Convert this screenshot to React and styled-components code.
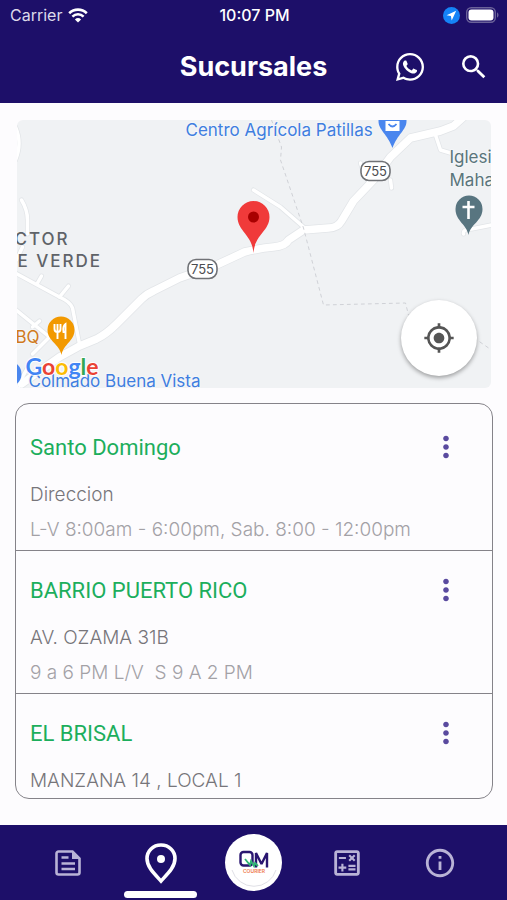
import React from "react";
import styled, { createGlobalStyle } from "styled-components";
import { FaWhatsapp } from "react-icons/fa";
import {
  MdSearch,
  MdMyLocation,
  MdMoreVert,
  MdOutlineCalculate,
  MdInfoOutline,
} from "react-icons/md";

const branches = [
  {
    name: "Santo Domingo",
    address: "Direccion",
    hours: "L-V 8:00am - 6:00pm, Sab. 8:00 - 12:00pm",
  },
  {
    name: "BARRIO PUERTO RICO",
    address: "AV. OZAMA 31B",
    hours: "9 a 6 PM L/V  S 9 A 2 PM",
  },
  {
    name: "EL BRISAL",
    address: "MANZANA 14 , LOCAL 1",
  },
];

export default function App() {
  return (
    <Screen>
      <GlobalStyle />
      <Header>
        <StatusBar>
          <StatusGroup>
            Carrier <WifiIcon />
          </StatusGroup>
          <Clock>10:07 PM</Clock>
          <StatusGroup $end>
            <LocationIcon />
            <BatteryIcon />
          </StatusGroup>
        </StatusBar>
        <TitleBar>
          <Title>Sucursales</Title>
          <Actions>
            <IconButton aria-label="WhatsApp">
              <FaWhatsapp size={32} />
            </IconButton>
            <IconButton aria-label="Buscar">
              <MdSearch size={32} />
            </IconButton>
          </Actions>
        </TitleBar>
      </Header>
      <Main>
        <MapPanel>
          <MapDrawing />
          <LocateButton aria-label="Mi ubicación">
            <MdMyLocation size={32} />
          </LocateButton>
        </MapPanel>
        <BranchList>
          {branches.map((branch) => (
            <Branch key={branch.name}>
              <BranchHead>
                <BranchName>{branch.name}</BranchName>
                <MenuButton aria-label={`Opciones de ${branch.name}`}>
                  <MdMoreVert size={34} />
                </MenuButton>
              </BranchHead>
              <Address>{branch.address}</Address>
              {branch.hours && <Hours>{branch.hours}</Hours>}
            </Branch>
          ))}
        </BranchList>
      </Main>
      <TabBar>
        <Tab href="#noticias" aria-label="Noticias">
          <NewsIcon />
        </Tab>
        <Tab href="#sucursales" aria-label="Sucursales" $active>
          <PinIcon />
        </Tab>
        <Tab href="#inicio" aria-label="Inicio">
          <LogoBadge>
            <Logo />
          </LogoBadge>
        </Tab>
        <Tab href="#calculadora" aria-label="Calculadora">
          <MdOutlineCalculate size={34} />
        </Tab>
        <Tab href="#info" aria-label="Información">
          <MdInfoOutline size={34} />
        </Tab>
      </TabBar>
    </Screen>
  );
}

function WifiIcon() {
  return (
    <svg width="20" height="15" viewBox="0 0 20 15" fill="none" stroke="#fff">
      <path d="M1.2 5.2a12.6 12.6 0 0 1 17.6 0" strokeWidth="2.6" />
      <path d="M4.4 8.6a8 8 0 0 1 11.2 0" strokeWidth="2.5" />
      <path
        d="M10 14.6 6.9 11.5a4.5 4.5 0 0 1 6.2 0z"
        fill="#fff"
        stroke="none"
      />
    </svg>
  );
}

function LocationIcon() {
  return (
    <svg width="17" height="17" viewBox="0 0 17 17">
      <circle cx="8.5" cy="8.5" r="8.5" fill="#1583f7" />
      <path d="M13.2 3.8 3.6 8.3l4.3.8.8 4.4z" fill="#fff" />
    </svg>
  );
}

function BatteryIcon() {
  return (
    <svg width="33" height="16" viewBox="0 0 33 16">
      <rect
        x="0.7"
        y="0.7"
        width="28.6"
        height="14.6"
        rx="4.5"
        fill="none"
        stroke="#6a6199"
        strokeWidth="1.4"
      />
      <rect x="2.5" y="2.5" width="25" height="11" rx="3" fill="#fff" />
      <path d="M31 5.5c2 .6 2 4.4 0 5z" fill="#6a6199" />
    </svg>
  );
}

function NewsIcon() {
  return (
    <svg width="26" height="26" viewBox="0 0 26 26" fill="none">
      <path
        d="M17.5 1.5h-14a2 2 0 0 0-2 2v19a2 2 0 0 0 2 2h19a2 2 0 0 0 2-2v-14z"
        stroke="currentColor"
        strokeWidth="2.6"
      />
      <path d="M17 1v8h8z" fill="currentColor" />
      <path
        d="M6.5 7.5h7M6.5 13.5h13.5M6.5 19h13.5"
        stroke="currentColor"
        strokeWidth="2.7"
      />
    </svg>
  );
}

function PinIcon() {
  return (
    <svg width="34" height="42" viewBox="0 0 34 42">
      <path
        d="M17 3C9 3 3 9 3 16.5 3 25 10 31.5 17 39c7-7.5 14-14 14-22.5C31 9 25 3 17 3z"
        fill="none"
        stroke="#fff"
        strokeWidth="3.6"
      />
      <circle cx="17" cy="17" r="4" fill="#fff" />
    </svg>
  );
}

function Logo() {
  return (
    <svg width="50" height="50" viewBox="0 0 50 50">
      <path d="M3 32a23 23 0 0 0 44 0" fill="none" stroke="#e0e0e6" />
      <rect
        x="11.5"
        y="14"
        width="12"
        height="13.5"
        rx="3"
        fill="none"
        stroke="#2a1670"
        strokeWidth="2.4"
      />
      <path
        d="M27 29.5V15l5.5 11L38 15v14.5"
        fill="none"
        stroke="#2a1670"
        strokeWidth="2.4"
        strokeLinejoin="bevel"
      />
      <path
        d="m16 21 5 6 1-4 3 5 1-3 3 3"
        fill="none"
        stroke="#2fb573"
        strokeWidth="1.8"
      />
      <text
        x="25"
        y="35"
        textAnchor="middle"
        fontSize="5"
        fontWeight="600"
        fill="#ee7a4a"
      >
        COURIER
      </text>
    </svg>
  );
}

function RouteShield({ x, y }) {
  return (
    <g transform={`translate(${x} ${y})`}>
      <rect
        x="-14.5"
        y="-9.5"
        width="29"
        height="19"
        rx="8"
        fill="#fff"
        stroke="#707276"
        strokeWidth="1.6"
      />
      <text y="5" textAnchor="middle" fontSize="13" fill="#4b4d50">
        755
      </text>
    </g>
  );
}

const mainRoad =
  "M5 264 43 237 63 226 80 219Q90 214 100 204L125 179Q130 174 137 171L163 158 200 145 228 132Q245 128 257 127T272 120L287 110 312 108Q321 108 325 101L337 81 357 60 374 37 394 18 424 11 437 6 446-2";

const streets = [
  "M237 70 264 87 287 107",
  "M-3 152 43 177Q54 182 56 188L63 224",
  "M21 163 25 156M43 177 52 166",
  "M-3 188 33 217 16 234M16 207 23 201",
  "M0 268 12 246",
  "M5 80Q11 90 11 100V114M6 127 0 140",
  "M-1 7Q6 23-1 40",
  "M344 43 347 52M374 60 375 68M419 15 424 30 434 33",
  "M447 114Q446 109 455 109L475 105",
];

function MapDrawing() {
  return (
    <svg
      width="100%"
      height="100%"
      viewBox="0 0 475 268"
      preserveAspectRatio="xMidYMid slice"
    >
      <g fill="none" strokeLinejoin="round" strokeLinecap="round">
        <g stroke="#e2e5e8">
          <path d={mainRoad} strokeWidth="9" />
          {streets.map((d) => (
            <path key={d} d={d} strokeWidth="5" />
          ))}
        </g>
        <g stroke="#fff">
          <path d={mainRoad} strokeWidth="7.5" />
          {streets.map((d) => (
            <path key={d} d={d} strokeWidth="3.5" />
          ))}
        </g>
        <path
          d="M255 0 265 27 264 40 287 108 307 185 389 183 392 195 462 221 475 230"
          stroke="#cfd1d6"
          strokeDasharray="3 4"
        />
      </g>
      <RouteShield x={186} y={149} />
      <RouteShield x={359} y={51} />

      <path d="M362-4v5c0 9 9 13 14 27 5-14 14-18 14-27v-5z" fill="#4a86ee" />
      <path d="M369 1h14v10h-14z" fill="#fff" />
      <path d="M372 4q4 5 8 0" fill="none" stroke="#4a86ee" strokeWidth="1.8" />

      <path
        d="M452 115c-2-11-13-14-13-26a13.5 13.5 0 0 1 27 0c0 12-12 15-14 26z"
        fill="#587580"
      />
      <path d="M452 81v18M446 87h12" stroke="#fff" strokeWidth="2.6" />

      <path
        d="M45 235c-2-11-14-14-14-25a13.5 13.5 0 0 1 27 0c0 11-11 14-13 25z"
        fill="#f29900"
      />
      <path
        d="M38 204v5q0 3 3 3t3-3v-5M41 204v15M49 219v-15q-3 2-2 8h2"
        fill="none"
        stroke="#fff"
        strokeWidth="1.9"
      />

      <path
        d="M237 133c-1-18-16-22-16-36a16 16 0 0 1 32 0c0 14-15 18-16 36z"
        fill="#f03a3a"
      />
      <circle cx="237" cy="97" r="5.5" fill="#a80000" />

      <circle cx="-8" cy="254" r="13" fill="#4a86ee" />
      <MapLabel x="169" y="16">
        Centro Agrícola Patillas
      </MapLabel>
      <MapLabel x="12" y="267">
        Colmado Buena Vista
      </MapLabel>
      <MapLabel x="433" y="43" $color="#5a757b">
        Iglesi
      </MapLabel>
      <MapLabel x="433" y="66" $color="#5a757b">
        Maha
      </MapLabel>
      <MapLabel x="-1" y="223" $color="#d07a1c">
        BQ
      </MapLabel>
      <AreaLabel x="-2" y="125">
        CTOR
      </AreaLabel>
      <AreaLabel x="1" y="147">
        E VERDE
      </AreaLabel>
      <GoogleMark x="9" y="255">
        <tspan fill="#4285f4">G</tspan>
        <tspan fill="#ea4335">o</tspan>
        <tspan fill="#fbbc05">o</tspan>
        <tspan fill="#4285f4">g</tspan>
        <tspan fill="#34a853">l</tspan>
        <tspan fill="#ea4335">e</tspan>
      </GoogleMark>
    </svg>
  );
}

const GlobalStyle = createGlobalStyle`
  * {
    box-sizing: border-box;
  }
  body {
    margin: 0;
    background: #fdfcfe;
    font-family: Inter, "Liberation Sans", sans-serif;
  }
  button {
    padding: 0;
    border: 0;
    background: none;
    color: inherit;
    cursor: pointer;
  }
  svg {
    display: block;
  }
`;

const Screen = styled.div`
  display: flex;
  flex-direction: column;
  height: 100vh;
`;

const Header = styled.header`
  flex: none;
  background: #1d0f69;
  color: #fff;
`;

const StatusBar = styled.div`
  display: grid;
  grid-template-columns: 1fr auto 1fr;
  align-items: center;
  height: 30px;
  padding: 0 8px 0 10px;
  font-size: 16px;
`;

const StatusGroup = styled.div`
  display: flex;
  align-items: center;
  justify-content: ${(props) => (props.$end ? "flex-end" : "flex-start")};
  gap: 6px;
  color: #dcd9ea;
`;

const Clock = styled.time`
  font-weight: 500;
`;

const TitleBar = styled.div`
  display: grid;
  grid-template-columns: 1fr auto 1fr;
  align-items: center;
  height: 73px;
  padding: 0 17px;
`;

const Title = styled.h1`
  grid-column: 2;
  margin: 0;
  font-size: 27px;
  font-weight: 700;
`;

const Actions = styled.div`
  display: flex;
  justify-content: flex-end;
  gap: 32px;
`;

const IconButton = styled.button`
  display: flex;
`;

const Main = styled.main`
  display: flex;
  flex: 1;
  flex-direction: column;
  gap: 15px;
  min-height: 0;
  padding: 17px 14px 26px 15px;
`;

const MapPanel = styled.section`
  position: relative;
  flex: none;
  height: 268px;
  margin: 0 2px;
  overflow: hidden;
  border-radius: 6px;
  background: #f0f2f4;
`;

const MapLabel = styled.text`
  fill: ${(props) => props.$color || "#3f7ee0"};
  font-size: 17px;
  stroke: #f4f6f8;
  stroke-width: 2px;
  paint-order: stroke;
`;

const AreaLabel = styled.text`
  fill: #5f6368;
  font-size: 17px;
  font-weight: 500;
  letter-spacing: 2px;
`;

const GoogleMark = styled.text`
  font-family: Lato, sans-serif;
  font-size: 23px;
  font-weight: 700;
  stroke: #fff;
  stroke-width: 2px;
  paint-order: stroke;
`;

const LocateButton = styled.button`
  position: absolute;
  right: 14px;
  bottom: 12px;
  display: flex;
  align-items: center;
  justify-content: center;
  width: 76px;
  height: 76px;
  border-radius: 50%;
  background: #fff;
  box-shadow: 0 2px 4px rgba(0, 0, 0, 0.35);
  color: #555;
`;

const BranchList = styled.ul`
  flex: 1;
  min-height: 0;
  margin: 0;
  padding: 0;
  overflow: auto;
  scrollbar-width: none;
  border: 1px solid #858389;
  border-radius: 14px;
  list-style: none;
`;

const Branch = styled.li`
  padding: 26px 29px 3px 14px;
  font-weight: 300;

  & + & {
    padding-top: 22px;
    border-top: 1px solid #858389;
  }
`;

const BranchHead = styled.div`
  display: flex;
  align-items: center;
  justify-content: space-between;
  height: 34px;
  margin-bottom: 13px;
`;

const BranchName = styled.h2`
  margin: 0;
  color: #1cae5c;
  font-family: Roboto, sans-serif;
  font-size: 22px;
  font-weight: 400;
`;

const MenuButton = styled.button`
  display: flex;
  color: #5a4a9f;
`;

const Address = styled.p`
  margin: 0;
  color: #77757a;
  font-size: 19px;
  line-height: 35px;
`;

const Hours = styled(Address)`
  color: #a3a1a6;
  white-space: pre-wrap;
`;

const TabBar = styled.nav`
  display: flex;
  flex: none;
  justify-content: space-around;
  height: 75px;
  padding: 0 21px;
  background: #1d0f69;
`;

const Tab = styled.a`
  position: relative;
  display: flex;
  flex: 1;
  align-items: center;
  justify-content: center;
  color: #b9b3d6;

  &::after {
    content: "";
    display: ${(props) => (props.$active ? "block" : "none")};
    position: absolute;
    bottom: 2px;
    width: 73px;
    height: 7px;
    border-radius: 4px;
    background: #fff;
  }
`;

const LogoBadge = styled.span`
  display: flex;
  align-items: center;
  justify-content: center;
  width: 57px;
  height: 57px;
  border-radius: 50%;
  background: #fff;
`;
